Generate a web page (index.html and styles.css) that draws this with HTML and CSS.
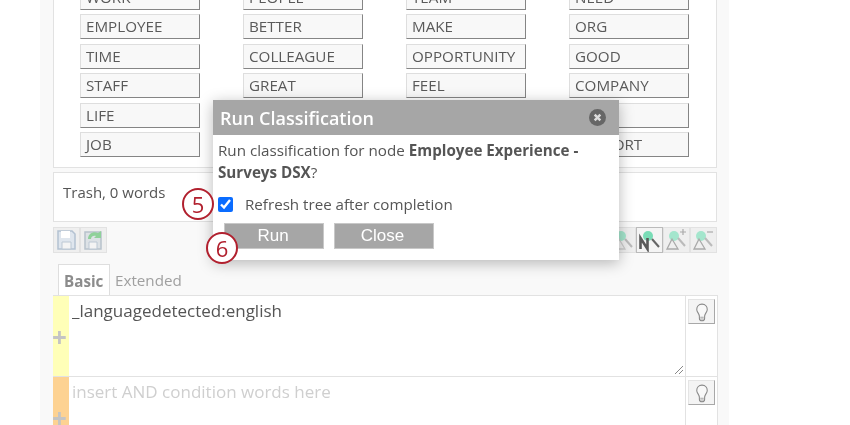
FILE: index.html
```html
<!DOCTYPE html>
<html lang="en">
<head>
<meta charset="utf-8">
<title>Run Classification</title>
<link rel="stylesheet" href="styles.css">
</head>
<body>
<main class="panel">
  <section class="words">
    <div class="word">WORK</div><div class="word">PEOPLE</div><div class="word">TEAM</div><div class="word">NEED</div>
    <div class="word">EMPLOYEE</div><div class="word">BETTER</div><div class="word">MAKE</div><div class="word">ORG</div>
    <div class="word">TIME</div><div class="word">COLLEAGUE</div><div class="word">OPPORTUNITY</div><div class="word">GOOD</div>
    <div class="word">STAFF</div><div class="word">GREAT</div><div class="word">FEEL</div><div class="word">COMPANY</div>
    <div class="word">LIFE</div><div class="word"></div><div class="word"></div><div class="word"></div>
    <div class="word">JOB</div><div class="word"></div><div class="word"></div><div class="word">SUPPORT</div>
  </section>
  <section class="trash">Trash, 0 words</section>
  <div class="toolbar">
    <div class="tools">
      <span class="tool">
        <svg class="icon" viewBox="0 0 25 24"><path d="M4 3h14l3 3v15H4z" fill="#dfe6ee" stroke="#b4c2d2" stroke-width="1.5"/><path d="M7 3h9v7H7z" fill="#fff"/><path d="M8 14h9v7H8z" fill="#f4f4f4" stroke="#bcc8d4"/></svg>
      </span>
      <span class="tool">
        <svg class="icon" viewBox="0 0 25 24"><path d="M4 4h16v17H4z" fill="#dde2e6" stroke="#b8c2cc" stroke-width="1.5"/><path d="M8 14h8v7H8z" fill="#f4f4f4" stroke="#bcc8d4"/><path d="M7 11c0-5 5-8 10-6l3-2v7h-7l2-2c-3-1-5 1-5 3z" fill="#8fd19a"/></svg>
      </span>
    </div>
    <div class="tools">
      <span class="tool">
        <svg class="icon" viewBox="0 0 25 24"><circle cx="11" cy="8" r="5" fill="#a4e6cd"/><path d="M15 11l7 8" stroke="#bbb" stroke-width="2"/><path d="M9 11l-5 10h11z" fill="none" stroke="#ccc" stroke-width="1.3"/></svg>
      </span>
      <span class="tool tool-on">
        <svg class="icon" viewBox="0 0 25 24"><circle cx="11" cy="8" r="5" fill="#79dcb6"/><path d="M15 11l7 8" stroke="#666" stroke-width="2"/><path d="M3.5 21V10l7 11V10" fill="none" stroke="#5a5a5a" stroke-width="2.6"/></svg>
      </span>
      <span class="tool">
        <svg class="icon" viewBox="0 0 25 24"><circle cx="10" cy="8" r="5" fill="#a4e6cd"/><path d="M14 10l7 8" stroke="#bbb" stroke-width="2"/><path d="M8 11l-5 10h11z" fill="none" stroke="#aaa" stroke-width="1.3"/><path d="M16 4h6M19 1v6" stroke="#aaa" stroke-width="1.2"/></svg>
      </span>
      <span class="tool">
        <svg class="icon" viewBox="0 0 25 24"><circle cx="10" cy="8" r="5" fill="#a4e6cd"/><path d="M14 10l7 8" stroke="#bbb" stroke-width="2"/><path d="M8 11l-5 10h11z" fill="none" stroke="#aaa" stroke-width="1.3"/><path d="M16 4h6" stroke="#aaa" stroke-width="1.2"/></svg>
      </span>
    </div>
  </div>
  <nav class="tabs">
    <span class="tab tab-active">Basic</span>
    <span class="tab">Extended</span>
  </nav>
  <section class="conditions">
    <div class="condition">
      <div class="side side-yellow">+</div>
      <div class="field">_languagedetected:english
        <svg class="grip" viewBox="0 0 10 10"><path d="M1 9l8-8M5 9l4-4" stroke="#888" fill="none"/></svg>
      </div>
      <div class="hint">
        <button class="bulb"><svg viewBox="0 0 16 22"><path d="M8 2c-4 0-6 3-6 6 0 3 3 5 3 8v2c0 2 1 3 3 3s3-1 3-3v-2c0-3 3-5 3-8 0-3-2-6-6-6z" fill="#f8f8f8" stroke="#888" stroke-width="1.2"/><path d="M6 17h4M6 19h4" stroke="#999"/></svg></button>
      </div>
    </div>
    <div class="condition">
      <div class="side side-orange">+</div>
      <div class="field field-empty">insert AND condition words here</div>
      <div class="hint">
        <button class="bulb"><svg viewBox="0 0 16 22"><path d="M8 2c-4 0-6 3-6 6 0 3 3 5 3 8v2c0 2 1 3 3 3s3-1 3-3v-2c0-3 3-5 3-8 0-3-2-6-6-6z" fill="#f8f8f8" stroke="#888" stroke-width="1.2"/><path d="M6 17h4M6 19h4" stroke="#999"/></svg></button>
      </div>
    </div>
  </section>
</main>

<div class="dialog">
  <header class="dialog-head">
    <span>Run Classification</span>
    <span class="dialog-close"><svg viewBox="0 0 18 18"><circle cx="9" cy="9" r="9" fill="#666"/><path d="M6 6l6 6M12 6l-6 6" stroke="#ddd" stroke-width="2.6"/></svg></span>
  </header>
  <div class="dialog-body">
    <p class="dialog-text">Run classification for node <b>Employee Experience - Surveys DSX</b>?</p>
    <label class="check"><input type="checkbox" checked>Refresh tree after completion</label>
    <div class="dialog-actions">
      <button class="action">Run</button>
      <button class="action">Close</button>
    </div>
  </div>
</div>
<span class="marker marker-5">5</span>
<span class="marker marker-6">6</span>
</body>
</html>
```
FILE: styles.css
```css
* { box-sizing: border-box; }
html, body { margin: 0; height: 425px; overflow: hidden; background: #fff; }
body { position: relative; font-family: "Open Sans", sans-serif; color: #555; filter: blur(.4px); }

.panel {
  width: 689px;
  height: 445px;
  margin: -20px 0 0 40px;
  padding: 0 12px 0 13px;
  background: #f9f9f9;
}

.words {
  display: grid;
  grid-template-columns: repeat(4, 120px);
  grid-auto-rows: 25px;
  align-content: start;
  column-gap: 43px;
  row-gap: 4.5px;
  height: 188px;
  padding: 4.5px 0 0 26px;
  background: #fff;
  border: 1.5px solid #e2e2e2;
  border-top: 0;
}
.word {
  height: 25px;
  padding-left: 5px;
  font-size: 15.2px;
  line-height: 23px;
  color: #5a5a5a;
  background: #f8f8f8;
  border: 1.5px solid;
  border-color: #dedede #858585 #858585 #dedede;
}

.trash {
  height: 50px;
  margin-top: 4px;
  padding: 8px 9px;
  font-size: 15px;
  line-height: 22px;
  background: #fff;
  border: 1.5px solid #e2e2e2;
}

.toolbar { display: flex; justify-content: space-between; margin-top: 5px; height: 26px; }
.tools { display: flex; }
.tool {
  width: 27px;
  height: 26px;
  padding: 0;
  background: #efefef;
  border: 1px solid #e2e2e2;
}
.tool-on { background: #f4f4f4; border-color: #bbb; }
.icon { display: block; width: 25px; height: 24px; }

.tabs { display: flex; margin: 11px 0 0 5px; height: 31px; }
.tab { padding: 5px 5px 0; font-size: 15.2px; line-height: 22px; color: #a0a0a0; }
.tab-active {
  width: 52px;
  font-weight: 700;
  color: #8c8c8c;
  background: #fff;
  border: 1.5px solid #dedede;
  border-bottom: 0;
}

.conditions { width: 665px; }
.condition { display: flex; height: 81px; border-top: 1.5px solid #e2e2e2; }
.side {
  display: flex;
  align-items: center;
  justify-content: center;
  width: 16px;
  padding: 2px 3px 0 0;
  font-size: 26px;
  font-weight: 700;
  line-height: 26px;
  color: #c4c4c4;
}
.side-yellow { background: #ffffb8; }
.side-orange { background: #fdd292; }
.field {
  position: relative;
  width: 617px;
  padding: 3px 3px;
  font-size: 17px;
  line-height: 24px;
  color: #555;
  background: #fff;
  border-right: 1.5px solid #e2e2e2;
}
.field-empty { color: #cfcfcf; }
.grip { position: absolute; right: 1px; bottom: 1px; width: 10px; height: 10px; }
.hint { flex: 1; padding: 3px 0 0 2px; background: #fff; border-right: 1.5px solid #e2e2e2; }
.bulb {
  display: flex;
  align-items: center;
  justify-content: center;
  width: 27px;
  height: 25px;
  padding: 0;
  background: #f4f4f4;
  border: 1px solid;
  border-color: #e4e4e4 #a8a8a8 #a8a8a8 #e4e4e4;
}
.bulb svg { width: 14px; height: 20px; }

.dialog {
  position: absolute;
  left: 213px;
  top: 100px;
  width: 406px;
  height: 160px;
  background: #fff;
  box-shadow: 0 3px 14px rgba(0, 0, 0, .28);
}
.dialog-head {
  display: flex;
  align-items: center;
  justify-content: space-between;
  height: 35px;
  padding: 0 13px 0 7px;
  font-size: 18px;
  font-weight: 600;
  color: #fff;
  background: #a6a6a6;
}
.dialog-close { display: block; width: 17px; height: 17px; }
.dialog-close svg { display: block; width: 17px; height: 17px; }
.dialog-body { padding: 4px 5px 0 5px; }
.dialog-text { margin: 0; font-size: 15.2px; line-height: 22px; color: #555; }
.check { display: flex; align-items: center; height: 22px; margin-top: 10px; font-size: 15.15px; color: #555; }
.check input { width: 15px; height: 15px; margin: 0 12px 0 0; accent-color: #0a6cff; }
.dialog-actions { display: flex; gap: 9.5px; margin-top: 8px; padding-left: 6px; }
.action {
  width: 100px;
  height: 26px;
  padding: 0 2px 1px 0;
  font-family: "Liberation Sans", sans-serif;
  font-size: 17px;
  line-height: 20px;
  color: #fff;
  background: #a6a6a6;
  border: 1px solid #c8c8c8;
}

.marker {
  position: absolute;
  display: flex;
  align-items: center;
  justify-content: center;
  width: 32px;
  height: 32px;
  font-size: 22px;
  line-height: 1;
  color: #b1202e;
  background: #fff;
  border: 2.5px solid #b1202e;
  border-radius: 50%;
}
.marker-5 { left: 182px; top: 188px; }
.marker-6 { left: 206px; top: 232px; }
```
